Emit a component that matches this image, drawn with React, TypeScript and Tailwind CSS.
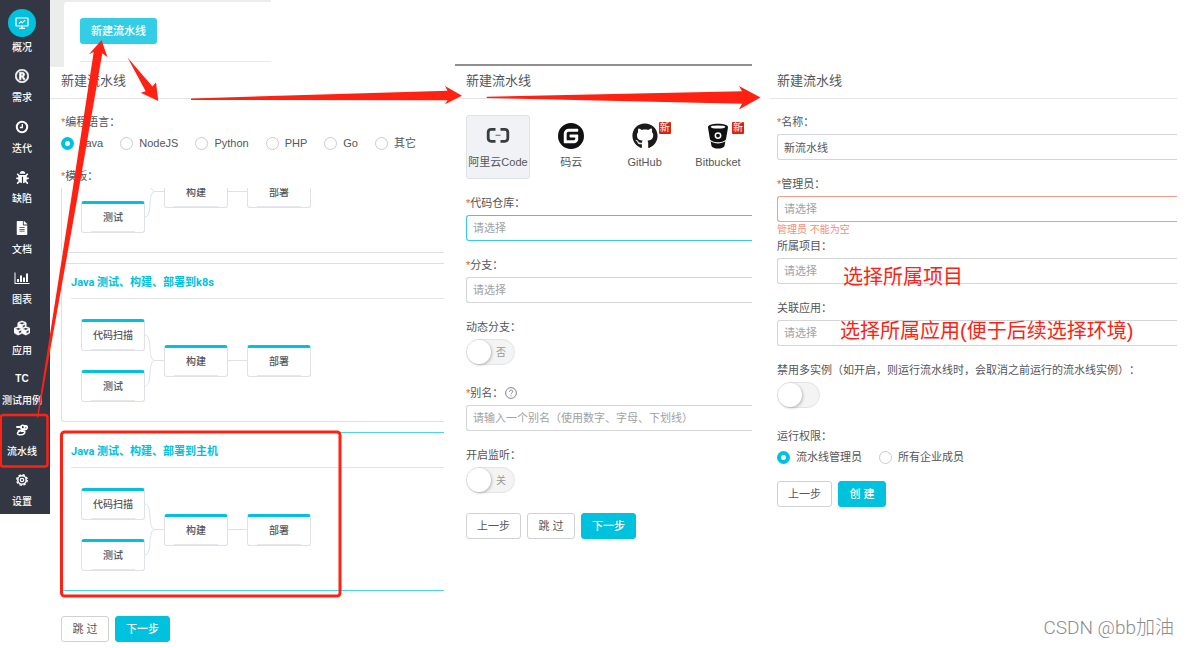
import type { ReactNode } from "react";
import { FaBug, FaCubes, FaFileAlt, FaGithub, FaRegRegistered } from "react-icons/fa";
import { SiGitee } from "react-icons/si";

function OverviewIcon() {
  return (
    <svg className="w-3.5 h-3.5" viewBox="0 0 14 14" fill="none" stroke="currentColor" strokeWidth="1.2">
      <rect x="1" y="2" width="12" height="8" rx="0.6" />
      <path d="M4 7.6 6 5.6l1.4 1.2L10 4.2M4 12.3h6M7 10v2" />
    </svg>
  );
}

function ClockIcon() {
  return (
    <svg className="w-3.5 h-3.5" viewBox="0 0 14 14" fill="none" stroke="currentColor">
      <circle cx="7" cy="7" r="5.2" strokeWidth="2" />
      <path d="M7.300 4v3.500H4.800" strokeWidth="1.300" />
    </svg>
  );
}

function ChartIcon() {
  return (
    <svg className="w-4 h-3.5" viewBox="0 0 16 14" fill="currentColor">
      <path d="M.5 1.500h1v10.500h14v1H.5z" />
      <path d="M3 8h2v3H3zM6 4.500h2V11H6zM9 6.500h2V11H9zM12 2.500h2V11h-2z" />
    </svg>
  );
}

function PipelineIcon() {
  return (
    <svg className="w-3.5 h-3.5" viewBox="0 0 14 14" fill="none" stroke="currentColor" strokeLinecap="round">
      <path d="M2 4h4M9.500 3.200c3-.8 3.600 1.600 1.600 3L3.600 8" strokeWidth="1.800" />
      <circle cx="7.800" cy="4.200" r="1.900" strokeWidth="1.600" />
      <path d="M4 8.400c-2.200.9-2 3.600.6 3.400M6.500 8.200h3.200c.6 2.400-1.500 3.800-4 3.600" strokeWidth="1.600" />
    </svg>
  );
}

function SettingsIcon() {
  return (
    <svg className="w-3.5 h-3.5" viewBox="0 0 14 14" fill="none" stroke="currentColor">
      <circle cx="7" cy="7" r="4.200" strokeWidth="1.500" />
      <circle cx="7" cy="7" r="5.300" strokeWidth="1.300" strokeDasharray="2.400 1.760" />
      <circle cx="7" cy="7" r="1.700" strokeWidth="1.300" />
    </svg>
  );
}

function AliyunIcon() {
  return (
    <svg className="w-6 h-6" viewBox="0 0 24 24" fill="none" stroke="#373d41" strokeWidth="2.800">
      <path d="M9.500 5.300H5.200A3 3 0 0 0 2.200 8.100v6.400a3 3 0 0 0 3 2.800H9.500" />
      <path d="M14.500 5.300h4.300a3 3 0 0 1 3 2.800v6.400a3 3 0 0 1-3 2.800H14.500" />
      <path d="M9.500 11.300h5" stroke="#777b80" strokeWidth="1.200" />
    </svg>
  );
}

function BitbucketIcon() {
  return (
    <svg className="w-[26px] h-[26px]" viewBox="0 0 26 26">
      <path
        fill="#111"
        d="M13 .8c5.600 0 10 1.300 10 3.200 0 1-1.600 9.900-2 12.300-.3 1.400-3.800 3-8 3s-7.700-1.600-8-3C4.600 13.900 3 5 3 4 3 2.100 7.400.8 13 .8z"
      />
      <path fill="#111" d="M5.600 18.300c2.200 1.500 4.700 2.100 7.400 2.100s5.200-.6 7.400-2.100l-.9 4.700c-.4 1.500-3.100 2.600-6.500 2.600S6.900 24.500 6.500 23z" />
      <ellipse cx="13" cy="4" rx="7.400" ry="1.600" fill="#fff" />
      <circle cx="13" cy="12.600" r="2.700" fill="none" stroke="#fff" strokeWidth="1.500" />
    </svg>
  );
}

const menu: { label: string; icon: ReactNode; active?: boolean }[] = [
  { label: "概况", icon: <OverviewIcon />, active: true },
  { label: "需求", icon: <FaRegRegistered size={14} strokeWidth={22} /> },
  { label: "迭代", icon: <ClockIcon /> },
  { label: "缺陷", icon: <FaBug size={13} /> },
  { label: "文档", icon: <FaFileAlt size={14} /> },
  { label: "图表", icon: <ChartIcon /> },
  { label: "应用", icon: <FaCubes size={16} strokeWidth={16} /> },
  { label: "测试用例", icon: <span className="text-[10px] font-bold leading-[14px]">TC</span> },
  { label: "流水线", icon: <PipelineIcon /> },
  { label: "设置", icon: <SettingsIcon /> },
];

function Sidebar() {
  return (
    <nav className="flex flex-col justify-between self-start shrink-0 w-[50px] min-h-[514px] pt-[9px] pb-1 pr-[6px] bg-[#333744] text-white">
      {menu.map((item) => (
        <a key={item.label} href="#" className="flex flex-col items-center gap-[3px]">
          {item.active ? (
            <span className="flex items-center justify-center w-7 h-7 rounded-full bg-[#00c1de]">{item.icon}</span>
          ) : (
            <span className="flex items-end justify-center h-7 pb-1">{item.icon}</span>
          )}
          <span className="text-[10px] leading-4 font-medium whitespace-nowrap">{item.label}</span>
        </a>
      ))}
    </nav>
  );
}

function PanelTitle({ children }: { children: ReactNode }) {
  return <h2 className="h-8 pb-[3px] flex items-center border-b border-[#e3e4e6] text-[13px]">{children}</h2>;
}

function FieldLabel({ htmlFor, required, children }: { htmlFor?: string; required?: boolean; children: ReactNode }) {
  return (
    <label htmlFor={htmlFor} className="flex items-center h-[18px] mb-[3px] whitespace-nowrap">
      {required && <span className="text-[#f15533]">*</span>}
      {children}
    </label>
  );
}

const fieldBase = "block w-full h-[26px] pl-1.5 rounded-l-[3px] border border-r-0 bg-white outline-none";

function SelectField({ id, label, required, border = "border-[#d3d5d8]", children }: { id: string; label: string; required?: boolean; border?: string; children?: ReactNode }) {
  return (
    <div className="relative">
      <FieldLabel htmlFor={id} required={required}>{label}</FieldLabel>
      <select id={id} className={`${fieldBase} appearance-none text-[#a0a2a5] ${border}`}>
        <option>请选择</option>
      </select>
      {children}
    </div>
  );
}

function Radio({ name, label, checked }: { name: string; label: string; checked?: boolean }) {
  return (
    <label className="flex items-center gap-1.5 whitespace-nowrap">
      <input
        type="radio"
        name={name}
        defaultChecked={checked}
        className="appearance-none w-[13px] h-[13px] rounded-full border border-[#c9cbce] bg-white checked:border-4 checked:border-[#00c1de]"
      />
      {label}
    </label>
  );
}

function Switch({ id, text }: { id: string; text?: string }) {
  return (
    <span className={`relative flex items-center h-[26px] rounded-full border border-[#e2e3e4] bg-[#f4f4f4] ${text ? "w-[49px]" : "w-[43px]"}`}>
      <input id={id} type="checkbox" role="switch" className="absolute inset-0 appearance-none" />
      <span className="w-6 h-6 rounded-full bg-white shadow-[1px_1px_3px_rgba(0,0,0,0.25)]" />
      {text && <span className="ml-[5px] text-[10px] text-[#999]">{text}</span>}
    </span>
  );
}

function Button({ primary, children }: { primary?: boolean; children: ReactNode }) {
  return (
    <button
      type="button"
      className={`h-[26px] min-w-12 px-[10px] rounded-[3px] border whitespace-nowrap ${
        primary ? "bg-[#00c1de] border-[#00c1de] text-white font-medium" : "bg-white border-[#cfd1d4]"
      }`}
    >
      {children}
    </button>
  );
}

function StageNode({ children }: { children?: ReactNode }) {
  return (
    <div className="flex flex-col items-center w-16 h-8 rounded-[3px] border border-t-3 border-[#dfe1e8] border-t-[#00c1de] text-[10px] font-medium">
      <span className="flex-1 flex items-center">{children}</span>
      <span className="w-11 border-b border-[#e6e7ee]" />
    </div>
  );
}

function TemplateCard({ title, first, selected }: { title?: string; first?: string; selected?: boolean }) {
  return (
    <li
      className={`shrink-0 h-[159px] pl-[9px] border border-r-0 rounded-l-[3px] ${
        selected ? "border-[#4dd3e6]" : "border-[#dfe0e3]"
      }`}
    >
      <h3 className="flex items-center h-[35px] pt-1 border-b border-[#e3e4e6] font-['Roboto','Noto_Sans_CJK_SC',sans-serif] font-bold text-[#00c1de]">
        {title}
      </h3>
      <div className="flex items-center pt-5 pl-[10px]">
        <div className="flex flex-col gap-[19px]">
          <StageNode>{first}</StageNode>
          <StageNode>测试</StageNode>
        </div>
        <svg className="w-[19px] h-[83px]" viewBox="0 0 19 83" fill="none" stroke="#dfe1e8">
          <path d="M0 16c8 0 2 25.500 10 25.500H19M0 67c8 0 2-25.500 10-25.500" />
        </svg>
        <StageNode>构建</StageNode>
        <span className="w-[19px] border-t border-[#dfe1e8]" />
        <StageNode>部署</StageNode>
      </div>
    </li>
  );
}

function TemplateStep() {
  return (
    <section>
      <div className="w-[221px] h-[67px] pl-[14px] pt-0.5 bg-[#ebecec]">
        <div className="h-full pl-4 pt-4 rounded-tl-[3px] bg-white">
          <button type="button" className="block h-[26px] px-[11px] rounded-[3px] bg-[#33cde5] text-white font-medium">
            新建流水线
          </button>
          <div className="mt-[17px] border-t border-[#e8e9ea]" />
        </div>
      </div>
      <div className="mr-[11px] [&>h2]:pl-[11px]">
        <PanelTitle>新建流水线</PanelTitle>
        <div className="pl-[11px] pt-[14px]">
          <FieldLabel required>编程语言：</FieldLabel>
          <div className="flex gap-[17px] h-[18px] mb-[15px]">
            <Radio name="lang" label="Java" checked />
            <Radio name="lang" label="NodeJS" />
            <Radio name="lang" label="Python" />
            <Radio name="lang" label="PHP" />
            <Radio name="lang" label="Go" />
            <Radio name="lang" label="其它" />
          </div>
          <FieldLabel required>模板：</FieldLabel>
          {/* scrolled to the end, the first card is cut at the top */}
          <ul className="flex flex-col justify-end gap-[10px] h-[403px] overflow-hidden">
            <TemplateCard />
            <TemplateCard title="Java 测试、构建、部署到k8s" first="代码扫描" />
            <TemplateCard title="Java 测试、构建、部署到主机" first="代码扫描" selected />
          </ul>
          <div className="flex gap-1.5 mt-[25px]">
            <Button>跳 过</Button>
            <Button primary>下一步</Button>
          </div>
        </div>
      </div>
    </section>
  );
}

const providers: { name: string; icon: ReactNode; active?: boolean; fresh?: boolean }[] = [
  { name: "阿里云Code", icon: <AliyunIcon />, active: true },
  { name: "码云", icon: <SiGitee size={26} color="#111" /> },
  { name: "GitHub", icon: <FaGithub size={26} color="#1b1b1b" />, fresh: true },
  { name: "Bitbucket", icon: <BitbucketIcon />, fresh: true },
];

function SourceStep() {
  return (
    <section className="mt-16 mr-[18px]">
      <div className="border-t-2 border-[#8f8f8f] pt-px [&>h2]:pl-[11px]">
        <PanelTitle>新建流水线</PanelTitle>
      </div>
      <div className="pl-[11px] pt-4">
        <div className="flex justify-between pr-0.5 mb-[15px]">
          {providers.map((p) => (
            <button
              key={p.name}
              type="button"
              className={`relative flex flex-col items-center w-16 h-16 pt-[7px] rounded-[3px] border whitespace-nowrap ${
                p.active ? "bg-[#f0f2f6] border-[#dfe1e8]" : "border-transparent"
              }`}
            >
              <span className="flex items-center h-[26px]">{p.icon}</span>
              <span className="mt-1 leading-[18px]">{p.name}</span>
              {p.fresh && (
                <span className="absolute right-[5px] top-1.5 w-3 h-3 rounded-[1px] bg-[#d9230f] text-white text-[10px] leading-3">新</span>
              )}
            </button>
          ))}
        </div>
        <div className="flex flex-col gap-[15px]">
          <SelectField id="repo" label="代码仓库：" required border="border-[#33cde5]" />
          <SelectField id="branch" label="分支：" required />
          <div className="mb-1">
            <FieldLabel htmlFor="dynamic">动态分支：</FieldLabel>
            <Switch id="dynamic" text="否" />
          </div>
          <div>
            <FieldLabel htmlFor="alias" required>
              别名：
              <svg className="w-3 h-3 ml-0.5" viewBox="0 0 12 12" fill="none" stroke="#777">
                <circle cx="6" cy="6" r="5.400" strokeWidth="0.900" />
                <path d="M4.400 4.800c0-2.200 3.300-2.100 3.300-.2C7.700 5.800 6 5.800 6 7.200M6 8.300v1" strokeWidth="0.900" />
              </svg>
            </FieldLabel>
            <input
              id="alias"
              placeholder="请输入一个别名（使用数字、字母、下划线）"
              className={`${fieldBase} border-[#d3d5d8] placeholder:text-[#a0a2a5]`}
            />
          </div>
          <div>
            <FieldLabel htmlFor="listen">开启监听：</FieldLabel>
            <Switch id="listen" text="关" />
          </div>
        </div>
        <div className="flex gap-1.5 mt-5">
          <Button>上一步</Button>
          <Button>跳 过</Button>
          <Button primary>下一步</Button>
        </div>
      </div>
    </section>
  );
}

function ConfirmStep() {
  return (
    <section className="mt-[67px] [&>h2]:pl-[7px]">
      <PanelTitle>新建流水线</PanelTitle>
      <div className="flex flex-col gap-[15px] pl-[7px] pt-[14px]">
        <div>
          <FieldLabel htmlFor="name" required>名称：</FieldLabel>
          <input id="name" defaultValue="新流水线" className={`${fieldBase} border-[#d3d5d8]`} />
        </div>
        <SelectField id="admin" label="管理员：" required border="border-[#f79a8a]">
          <p className="absolute top-full text-[10px] leading-[15px] text-[#f68a74]">管理员 不能为空</p>
        </SelectField>
        <SelectField id="project" label="所属项目：">
          <p className="absolute left-[66px] top-6 text-xl leading-8 text-[#ff2213] whitespace-nowrap">选择所属项目</p>
        </SelectField>
        <SelectField id="app" label="关联应用：">
          <p className="absolute left-[63px] top-4 text-xl leading-8 text-[#ff2213] whitespace-nowrap">选择所属应用(便于后续选择环境)</p>
        </SelectField>
        <div className="mb-1">
          <FieldLabel htmlFor="single">禁用多实例（如开启，则运行流水线时，会取消之前运行的流水线实例）：</FieldLabel>
          <Switch id="single" />
        </div>
        <div>
          <FieldLabel>运行权限：</FieldLabel>
          <div className="flex gap-[17px] h-[18px]">
            <Radio name="permission" label="流水线管理员" checked />
            <Radio name="permission" label="所有企业成员" />
          </div>
        </div>
        <div className="flex gap-1.5">
          <Button>上一步</Button>
          <Button primary>创 建</Button>
        </div>
      </div>
    </section>
  );
}

function Annotations() {
  return (
    <svg className="absolute left-0 top-0 pointer-events-none" width="1188" height="648" viewBox="0 0 1188 648">
      <g fill="#ff2213">
        <path d="M37 417.500 71 200 93.700 52 89 54.300 101.500 40l6 17.300-5.200-4L77 200 38.200 417.500z" />
        <path d="M127.500 57.500 152.500 86.500l3.500-4.200 2.300 18.700-17.600-8.300 5-1.400z" />
        <path d="M191 98.500 447.500 90.700 445 86l17 9.700-17 8.600 2.500-4L191 100z" />
        <path d="M486.700 96.800 742 91.300 739 86l21.500 11.500L739 109.500l3-5.800L486.700 98z" />
      </g>
      <g fill="none" stroke="#ff2213">
        <rect x="0.800" y="415" width="46.700" height="51.500" rx="2.500" strokeWidth="2.500" />
        <rect x="61.500" y="432" width="278.500" height="164" rx="3" strokeWidth="3" />
      </g>
    </svg>
  );
}

export default function App() {
  return (
    <div className="relative flex min-h-screen bg-white overflow-hidden font-['Liberation_Sans','Noto_Sans_CJK_SC',sans-serif] text-[11px] text-[#53565a] [text-spacing-trim:space-all]">
      <Sidebar />
      <main className="flex-1 grid grid-cols-[405fr_315fr_407fr] pr-[11px]">
        <TemplateStep />
        <SourceStep />
        <ConfirmStep />
      </main>
      <Annotations />
      <p className="absolute right-[14px] bottom-2 text-[19px] leading-6 text-[#8c8c8c] font-['Roboto','Noto_Sans_CJK_SC',sans-serif] font-light">CSDN @bb加油</p>
    </div>
  );
}
